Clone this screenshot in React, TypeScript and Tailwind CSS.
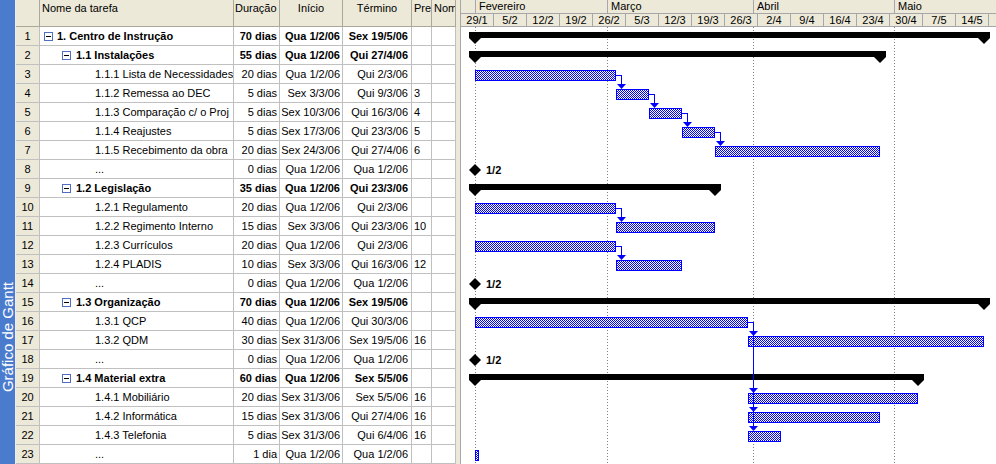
import React from 'react';

type Kind = 'sum' | 'task' | 'ms';
type Row = {
  n: number;
  name: string;
  lvl: 0 | 1 | 2;
  kind: Kind;
  dur: string;
  start: string;
  end: string;
  pre?: string;
  s: number;
  e: number;
};

// day index from Sun 29/1/06
const fe = (d: number) => 2 + d;
const mr = (d: number) => 30 + d;
const ab = (d: number) => 61 + d;
const ma = (d: number) => 91 + d;

const rows: Row[] = [
  { n: 1, name: '1. Centro de Instrução', lvl: 0, kind: 'sum', dur: '70 dias', start: 'Qua 1/2/06', end: 'Sex 19/5/06', s: fe(1), e: ma(20) },
  { n: 2, name: '1.1 Instalações', lvl: 1, kind: 'sum', dur: '55 dias', start: 'Qua 1/2/06', end: 'Qui 27/4/06', s: fe(1), e: ab(28) },
  { n: 3, name: '1.1.1 Lista de Necessidades', lvl: 2, kind: 'task', dur: '20 dias', start: 'Qua 1/2/06', end: 'Qui 2/3/06', s: fe(1), e: mr(3) },
  { n: 4, name: '1.1.2 Remessa ao DEC', lvl: 2, kind: 'task', dur: '5 dias', start: 'Sex 3/3/06', end: 'Qui 9/3/06', pre: '3', s: mr(3), e: mr(10) },
  { n: 5, name: '1.1.3 Comparação c/ o Proj', lvl: 2, kind: 'task', dur: '5 dias', start: 'Sex 10/3/06', end: 'Qui 16/3/06', pre: '4', s: mr(10), e: mr(17) },
  { n: 6, name: '1.1.4 Reajustes', lvl: 2, kind: 'task', dur: '5 dias', start: 'Sex 17/3/06', end: 'Qui 23/3/06', pre: '5', s: mr(17), e: mr(24) },
  { n: 7, name: '1.1.5 Recebimento da obra', lvl: 2, kind: 'task', dur: '20 dias', start: 'Sex 24/3/06', end: 'Qui 27/4/06', pre: '6', s: mr(24), e: ab(28) },
  { n: 8, name: '...', lvl: 2, kind: 'ms', dur: '0 dias', start: 'Qua 1/2/06', end: 'Qua 1/2/06', s: fe(1), e: fe(1) },
  { n: 9, name: '1.2 Legislação', lvl: 1, kind: 'sum', dur: '35 dias', start: 'Qua 1/2/06', end: 'Qui 23/3/06', s: fe(1), e: mr(24) },
  { n: 10, name: '1.2.1 Regulamento', lvl: 2, kind: 'task', dur: '20 dias', start: 'Qua 1/2/06', end: 'Qui 2/3/06', s: fe(1), e: mr(3) },
  { n: 11, name: '1.2.2 Regimento Interno', lvl: 2, kind: 'task', dur: '15 dias', start: 'Sex 3/3/06', end: 'Qui 23/3/06', pre: '10', s: mr(3), e: mr(24) },
  { n: 12, name: '1.2.3 Currículos', lvl: 2, kind: 'task', dur: '20 dias', start: 'Qua 1/2/06', end: 'Qui 2/3/06', s: fe(1), e: mr(3) },
  { n: 13, name: '1.2.4 PLADIS', lvl: 2, kind: 'task', dur: '10 dias', start: 'Sex 3/3/06', end: 'Qui 16/3/06', pre: '12', s: mr(3), e: mr(17) },
  { n: 14, name: '...', lvl: 2, kind: 'ms', dur: '0 dias', start: 'Qua 1/2/06', end: 'Qua 1/2/06', s: fe(1), e: fe(1) },
  { n: 15, name: '1.3 Organização', lvl: 1, kind: 'sum', dur: '70 dias', start: 'Qua 1/2/06', end: 'Sex 19/5/06', s: fe(1), e: ma(20) },
  { n: 16, name: '1.3.1 QCP', lvl: 2, kind: 'task', dur: '40 dias', start: 'Qua 1/2/06', end: 'Qui 30/3/06', s: fe(1), e: mr(31) },
  { n: 17, name: '1.3.2 QDM', lvl: 2, kind: 'task', dur: '30 dias', start: 'Sex 31/3/06', end: 'Sex 19/5/06', pre: '16', s: mr(31), e: ma(20) },
  { n: 18, name: '...', lvl: 2, kind: 'ms', dur: '0 dias', start: 'Qua 1/2/06', end: 'Qua 1/2/06', s: fe(1), e: fe(1) },
  { n: 19, name: '1.4 Material extra', lvl: 1, kind: 'sum', dur: '60 dias', start: 'Qua 1/2/06', end: 'Sex 5/5/06', s: fe(1), e: ma(6) },
  { n: 20, name: '1.4.1 Mobiliário', lvl: 2, kind: 'task', dur: '20 dias', start: 'Sex 31/3/06', end: 'Sex 5/5/06', pre: '16', s: mr(31), e: ma(6) },
  { n: 21, name: '1.4.2 Informática', lvl: 2, kind: 'task', dur: '15 dias', start: 'Sex 31/3/06', end: 'Qui 27/4/06', pre: '16', s: mr(31), e: ab(28) },
  { n: 22, name: '1.4.3 Telefonia', lvl: 2, kind: 'task', dur: '5 dias', start: 'Sex 31/3/06', end: 'Qui 6/4/06', pre: '16', s: mr(31), e: ab(7) },
  { n: 23, name: '...', lvl: 2, kind: 'task', dur: '1 dia', start: 'Qua 1/2/06', end: 'Qua 1/2/06', s: fe(1), e: fe(2) },
];

const links: [number, number][] = [
  [3, 4], [4, 5], [5, 6], [6, 7], [10, 11], [12, 13], [16, 17], [16, 20], [16, 21], [16, 22],
];

const X = (d: number) => Math.round((33 * d) / 7 - 0.5);
const RH = 19;

const weeks = ['29/1', '5/2', '12/2', '19/2', '26/2', '5/3', '12/3', '19/3', '26/3', '2/4', '9/4', '16/4', '23/4', '30/4', '7/5', '14/5'];

function MinusBox() {
  return (
    <span className="inline-flex w-[9px] h-[9px] border border-[#4f6fc4] bg-white items-center justify-center shrink-0">
      <span className="block w-[5px] h-px bg-black" />
    </span>
  );
}

function NameCell({ r }: { r: Row }) {
  if (r.lvl === 0) {
    return (
      <div className="flex items-center h-full pl-[4px] gap-[4px]">
        <MinusBox />
        <span className="font-bold whitespace-nowrap">{r.name}</span>
      </div>
    );
  }
  if (r.lvl === 1) {
    return (
      <div className="flex items-center h-full pl-[22px] gap-[5px]">
        <MinusBox />
        <span className="font-bold whitespace-nowrap">{r.name}</span>
      </div>
    );
  }
  return <div className="flex items-center h-full pl-[55px] whitespace-nowrap">{r.name}</div>;
}

function Table() {
  const cell = 'h-[19px] border-r border-b border-[#c0c0c0] overflow-hidden whitespace-nowrap';
  const hcell = 'h-[27px] border-r border-b border-[#aca899] bg-[#ece9d8] overflow-hidden whitespace-nowrap leading-[14px] pt-[1px]';
  return (
    <div className="w-[440px] grid grid-cols-[24px_194px_46px_63px_69px_20px_24px] content-start">
      <div className={hcell} />
      <div className={`${hcell} pl-[2px]`}>Nome da tarefa</div>
      <div className={`${hcell} pl-[1px]`}>Duração</div>
      <div className={`${hcell} text-center`}>Início</div>
      <div className={`${hcell} text-center`}>Término</div>
      <div className={`${hcell} pl-[2px]`}>Pre</div>
      <div className={`${hcell} pl-[2px]`}>Nom</div>
      {rows.map((r) => {
        const b = r.kind === 'sum' ? 'font-bold' : '';
        return (
          <React.Fragment key={r.n}>
            <div className={`${cell} bg-[#ece9d8] flex items-center justify-center`}>{r.n}</div>
            <div className={`${cell} bg-white`}>
              <NameCell r={r} />
            </div>
            <div className={`${cell} bg-white flex items-center justify-end pr-[2px] ${b}`}>{r.dur}</div>
            <div className={`${cell} bg-white flex items-center justify-end pr-[2px] ${b}`}>{r.start}</div>
            <div className={`${cell} bg-white flex items-center justify-end pr-[3px] ${b}`}>{r.end}</div>
            <div className={`${cell} bg-white flex items-center pl-[2px]`}>{r.pre ?? ''}</div>
            <div className={`${cell} bg-white`} />
          </React.Fragment>
        );
      })}
    </div>
  );
}

function ChartHeader() {
  return (
    <div className="h-[27px] bg-[#ece9d8] flex flex-col">
      <div className="h-[14px] flex border-b border-[#a7a6aa] leading-[13px]">
        <div className="w-[15px] shrink-0 border-r border-[#a7a6aa]" />
        <div className="w-[132px] shrink-0 border-r border-[#a7a6aa] pl-[3px]">Fevereiro</div>
        <div className="w-[146px] shrink-0 border-r border-[#a7a6aa] pl-[3px]">Março</div>
        <div className="w-[141px] shrink-0 border-r border-[#a7a6aa] pl-[3px]">Abril</div>
        <div className="flex-1 pl-[3px]">Maio</div>
      </div>
      <div className="h-[13px] flex border-b border-[#a7a6aa] leading-[12px] overflow-hidden">
        {weeks.map((w) => (
          <div key={w} className="w-[33px] shrink-0 border-r border-[#a7a6aa] text-center">
            {w}
          </div>
        ))}
        <div className="flex-1" />
      </div>
    </div>
  );
}

function ChartBody() {
  const W = 535;
  const H = 437;
  const byN = (n: number) => rows[n - 1];
  return (
    <svg width={W} height={H} className="block">
      <defs>
        <pattern id="chk" width="2" height="2" patternUnits="userSpaceOnUse">
          <rect width="2" height="2" fill="#ffffff" />
          <rect x="0" y="0" width="1" height="1" fill="#0000ff" />
          <rect x="1" y="1" width="1" height="1" fill="#0000ff" />
        </pattern>
      </defs>
      <rect width={W} height={H} fill="#ffffff" />
      {[3, 31, 62, 92].map((d) => (
        <line key={d} x1={X(d) + 0.5} x2={X(d) + 0.5} y1={0} y2={H} stroke="#808080" strokeDasharray="1 2" shapeRendering="crispEdges" />
      ))}
      {rows.map((r, i) => {
        const top = i * RH;
        if (r.kind === 'sum') {
          const a = X(r.s);
          const b = X(r.e);
          return (
            <g key={r.n} fill="#000">
              <rect x={a - 6} y={top + 5} width={b - a + 12} height={6} shapeRendering="crispEdges" />
              <polygon points={`${a - 6},${top + 11} ${a + 6},${top + 11} ${a},${top + 17}`} />
              <polygon points={`${b - 6},${top + 11} ${b + 6},${top + 11} ${b},${top + 17}`} />
            </g>
          );
        }
        if (r.kind === 'ms') {
          const c = X(r.s);
          const cy = top + 10;
          return (
            <g key={r.n}>
              <polygon points={`${c},${cy - 6} ${c + 6},${cy} ${c},${cy + 6} ${c - 6},${cy}`} fill="#000" />
              <text x={c + 11} y={top + 14} fontSize="11" fontWeight="bold" fontFamily="'Liberation Sans', Arial, sans-serif" fill="#000">
                1/2
              </text>
            </g>
          );
        }
        const a = X(r.s);
        const b = X(r.e);
        return (
          <rect
            key={r.n}
            x={a + 0.5}
            y={top + 5.5}
            width={b - a - 1}
            height={10}
            fill="url(#chk)"
            stroke="#0000ff"
            strokeWidth={1}
            shapeRendering="crispEdges"
          />
        );
      })}
      {links.map(([p, s]) => {
        const pr = byN(p);
        const sr = byN(s);
        const xe = X(pr.e);
        const xv = X(sr.s) + 5 + 0.5;
        const y1 = (p - 1) * RH + 10.5;
        const ts = (s - 1) * RH;
        return (
          <g key={`${p}-${s}`}>
            <line x1={xe} x2={xv} y1={y1} y2={y1} stroke="#0000ff" shapeRendering="crispEdges" />
            <line x1={xv} x2={xv} y1={y1} y2={ts + 1} stroke="#0000ff" shapeRendering="crispEdges" />
            <polygon points={`${xv - 4.5},${ts} ${xv + 4.5},${ts} ${xv},${ts + 5}`} fill="#0000ff" />
          </g>
        );
      })}
    </svg>
  );
}

export default function App() {
  return (
    <div className="w-[996px] h-[464px] overflow-hidden flex bg-white text-black text-[11px] font-['Liberation_Sans',Arial,sans-serif]">
      <div className="w-[16px] shrink-0 bg-[#4b7bcd] flex flex-col justify-end items-center pb-[72px] border-r border-[#e8eef8]">
        <span className="[writing-mode:vertical-rl] rotate-180 text-white text-[15px] leading-none whitespace-nowrap">
          Gráfico de Gantt
        </span>
      </div>
      <Table />
      <div className="w-[5px] shrink-0 bg-[#ece9d8] border-r border-[#a7a6aa]" />
      <div className="w-[535px] shrink-0 flex flex-col overflow-hidden">
        <ChartHeader />
        <ChartBody />
      </div>
    </div>
  );
}
